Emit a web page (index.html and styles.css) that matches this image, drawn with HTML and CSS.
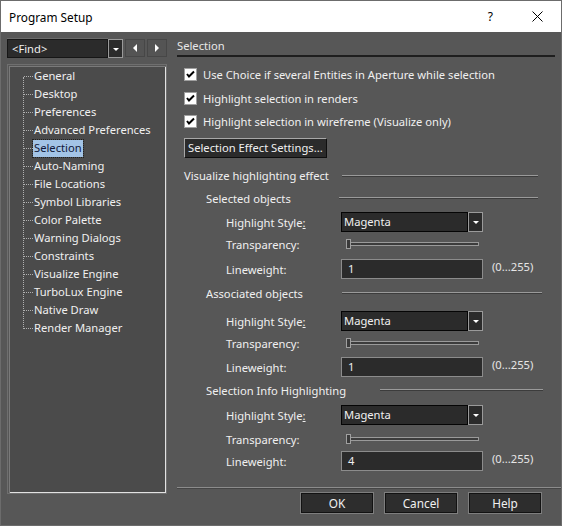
FILE: index.html
```html
<!DOCTYPE html>
<html lang="en">
  <head>
    <meta charset="UTF-8" />
    <title>Program Setup</title>
    <link rel="stylesheet" href="styles.css">
  </head>
  <body>
    <div class="window">
      <!-- Title bar -->
      <div class="titlebar">
        <span class="title">Program Setup</span>
        <span class="help">?</span>
        <svg class="close" width="11" height="11" viewBox="0 0 11 11">
          <path d="M0.5 0.5 L10.5 10.5 M10.5 0.5 L0.5 10.5" stroke="#000" stroke-width="1" fill="none" />
        </svg>
      </div>

      <div class="content">
        <!-- Left: find + tree -->
        <div class="side">
          <div class="find">
            <div class="find-box">&lt;Find&gt;</div>
            <div class="drop"><span class="tri-down"></span></div>
            <div class="nav"><span class="tri-left"></span></div>
            <div class="nav"><span class="tri-right"></span></div>
          </div>
          <div class="tree">
            <ul>
              <li>General</li>
              <li>Desktop</li>
              <li>Preferences</li>
              <li>Advanced Preferences</li>
              <li><span class="selected">Selection</span></li>
              <li>Auto-Naming</li>
              <li>File Locations</li>
              <li>Symbol Libraries</li>
              <li>Color Palette</li>
              <li>Warning Dialogs</li>
              <li>Constraints</li>
              <li>Visualize Engine</li>
              <li>TurboLux Engine</li>
              <li>Native Draw</li>
              <li>Render Manager</li>
            </ul>
          </div>
        </div>

        <!-- Right: page -->
        <div class="page">
          <div class="page-title">Selection</div>

          <div class="checks">
            <div class="check">
              <span class="box"><svg width="11" height="11" viewBox="0 0 11 11"><path d="M2 5 L4 7.5 L9 2.5" stroke="#000" stroke-width="2" fill="none" /></svg></span>
              Use Choice if several Entities in Aperture while selection
            </div>
            <div class="check">
              <span class="box"><svg width="11" height="11" viewBox="0 0 11 11"><path d="M2 5 L4 7.5 L9 2.5" stroke="#000" stroke-width="2" fill="none" /></svg></span>
              Highlight selection in renders
            </div>
            <div class="check short">
              <span class="box"><svg width="11" height="11" viewBox="0 0 11 11"><path d="M2 5 L4 7.5 L9 2.5" stroke="#000" stroke-width="2" fill="none" /></svg></span>
              Highlight selection in wirefreme (Visualize only)
            </div>
          </div>

          <div class="effect-btn">Selection Effect Settings...</div>

          <div class="group-title top">
            <span>Visualize highlighting effect</span>
            <span class="etch line-a"></span>
          </div>

          <!-- Selected objects -->
          <div class="group-title sub g1">
            <span>Selected objects</span>
            <span class="etch line-b"></span>
          </div>
          <div class="field style-row m3">
            <span class="label">Highlight Style<u>:</u></span>
            <div class="combo"><div class="combo-text">Magenta</div><div class="drop"><span class="tri-down"></span></div></div>
          </div>
          <div class="field slider-row">
            <span class="label">Transparency:</span>
            <div class="slider"><span class="track"></span><span class="thumb"></span></div>
          </div>
          <div class="field m3">
            <span class="label">Lineweight:</span>
            <div class="input">1</div>
            <span class="range">(0...255)</span>
          </div>

          <!-- Associated objects -->
          <div class="group-title sub g2">
            <span>Associated objects</span>
            <span class="etch line-c"></span>
          </div>
          <div class="field style-row m7">
            <span class="label">Highlight Style<u>:</u></span>
            <div class="combo"><div class="combo-text">Magenta</div><div class="drop"><span class="tri-down"></span></div></div>
          </div>
          <div class="field slider-row">
            <span class="label">Transparency:</span>
            <div class="slider"><span class="track"></span><span class="thumb"></span></div>
          </div>
          <div class="field m2">
            <span class="label">Lineweight:</span>
            <div class="input">1</div>
            <span class="range">(0...255)</span>
          </div>

          <!-- Selection Info Highlighting -->
          <div class="group-title sub g3">
            <span>Selection Info Highlighting</span>
            <span class="etch line-d"></span>
          </div>
          <div class="field style-row m4">
            <span class="label">Highlight Style<u>:</u></span>
            <div class="combo"><div class="combo-text">Magenta</div><div class="drop"><span class="tri-down"></span></div></div>
          </div>
          <div class="field slider-row m2">
            <span class="label">Transparency:</span>
            <div class="slider"><span class="track"></span><span class="thumb"></span></div>
          </div>
          <div class="field">
            <span class="label">Lineweight:</span>
            <div class="input">4</div>
            <span class="range">(0...255)</span>
          </div>

          <div class="separator"></div>

          <div class="buttons">
            <div class="btn">OK</div>
            <div class="btn">Cancel</div>
            <div class="btn">Help</div>
          </div>
        </div>
      </div>
    </div>
  </body>
</html>
```

FILE: styles.css
```css
* {
  margin: 0;
  padding: 0;
  box-sizing: border-box;
}

body {
  font-family: "Noto Sans", "Open Sans", sans-serif;
  font-size: 11.2px;
  background: #575757;
  color: #f0f0f0;
}

.window {
  width: 562px;
  height: 526px;
  border: 1px solid #6c6c6c;
  background: #575757;
  display: flex;
  flex-direction: column;
}

/* Title bar */
.titlebar {
  height: 31px;
  background: #fff;
  color: #000;
  display: flex;
  align-items: center;
  padding-left: 8px;
  font-size: 11.8px;
}

.titlebar .title {
  flex: 1;
}

.titlebar .help {
  font-size: 12px;
  margin-right: 39px;
}

.titlebar .close {
  margin-right: 18px;
}

.content {
  flex: 1;
  display: flex;
}

/* Left side */
.side {
  width: 166px;
  padding: 7px 0 0 6px;
  margin-right: 10px;
}

.find {
  display: flex;
  height: 19px;
}

.find-box {
  width: 102px;
  background: #2b2b2b;
  border: 1px solid #161616;
  box-shadow: 0 -1px 0 #6a6a6a;
  padding-left: 4px;
  line-height: 17px;
}

.drop {
  width: 15px;
  background: #2b2b2b;
  border: 1px solid #9a9a9a;
  display: flex;
  align-items: center;
  justify-content: center;
}

.tri-down {
  width: 0;
  height: 0;
  border-left: 3px solid transparent;
  border-right: 3px solid transparent;
  border-top: 3px solid #fff;
  margin-top: 1px;
}

.nav {
  width: 20px;
  height: 18px;
  margin-left: 2px;
  background: #545454;
  border: 1px solid #474747;
  display: flex;
  align-items: center;
  justify-content: center;
}

.nav:first-of-type {
  margin-left: 1px;
}

.tri-left,
.tri-right {
  width: 0;
  height: 0;
  border-top: 4px solid transparent;
  border-bottom: 4px solid transparent;
}

.tri-left {
  border-right: 4px solid #fff;
}

.tri-right {
  border-left: 4px solid #fff;
}

.tree {
  margin-top: 6px;
  width: 160px;
  height: 430px;
  background: #4b4b4b;
  border: 1px solid #6f6f6f;
  box-shadow: inset 1px 1px 0 #575757, inset 2px 2px 0 #7a7a7a, inset -1px -1px 0 #e2e2e2;
  padding: 2px 0 0 26px;
}

.tree ul {
  list-style: none;
  position: relative;
}

.tree ul::before {
  content: "";
  position: absolute;
  left: -11px;
  top: 10px;
  bottom: 8px;
  border-left: 1px dotted #b0b0b0;
}

.tree li {
  height: 18px;
  line-height: 18px;
  position: relative;
  white-space: nowrap;
}

.tree li::before {
  content: "";
  position: absolute;
  left: -10px;
  top: 9px;
  width: 9px;
  border-top: 1px dotted #b0b0b0;
}

.tree .selected {
  display: inline-block;
  background: #a3c4e6;
  color: #10183a;
  outline: 1px dotted #202020;
  height: 17px;
  line-height: 16px;
  padding: 0 1px;
  margin-left: -1px;
}

/* Right side */
.page {
  flex: 1;
  display: flex;
  flex-direction: column;
}

.page-title {
  margin: 5px 6px 0 0;
  height: 20px;
  line-height: 18px;
  border-bottom: 2px solid #1e1e1e;
  color: #e8e8e8;
}

.checks {
  margin-top: 5px;
  padding-left: 7px;
}

.check {
  height: 24px;
  display: flex;
  align-items: center;
  gap: 6px;
}

.check.short {
  height: 23px;
}

.box {
  width: 13px;
  height: 13px;
  background: #fff;
  border: 1px solid #a0a0a0;
  display: flex;
  align-items: center;
  justify-content: center;
}

.effect-btn {
  margin: 5px 0 0 7px;
  width: 143px;
  height: 20px;
  background: #2b2b2b;
  border: 1px solid #0e0e0e;
  border-top-color: #a8a8a8;
  border-left-color: #a8a8a8;
  line-height: 18px;
  padding-left: 3px;
  white-space: nowrap;
}

/* Groups */
.group-title {
  display: flex;
  align-items: center;
  height: 22px;
}

.group-title.top {
  margin-top: 6px;
  height: 23px;
  padding-left: 7px;
}

.group-title.sub {
  padding-left: 29px;
}

.group-title.g1 {
  height: 22px;
}

.group-title.g2 {
  margin-top: 3px;
}

.group-title.g3 {
  margin-top: 2px;
}

.etch {
  margin-left: auto;
  height: 2px;
  border-top: 1px solid #9a9a9a;
  border-bottom: 1px solid #3c3c3c;
}

.line-a {
  width: 196px;
  margin-right: 23px;
}

.line-b {
  width: 199px;
  margin-right: 23px;
}

.line-c {
  width: 200px;
  margin-right: 19px;
}

.line-d {
  width: 163px;
  margin-right: 18px;
}

.field {
  display: flex;
  align-items: center;
  height: 20px;
  padding-left: 49px;
}

.field.m2 { margin-top: 2px; }
.field.m3 { margin-top: 3px; }
.field.m4 { margin-top: 4px; }
.field.m7 { margin-top: 7px; }

.field.slider-row {
  height: 24px;
}

.label {
  width: 115px;
  white-space: nowrap;
}

.label u {
  text-decoration-thickness: 1px;
}

.combo {
  display: flex;
  width: 142px;
  height: 20px;
}

.combo-text {
  flex: 1;
  background: #2b2b2b;
  border: 1px solid #050505;
  line-height: 18px;
  padding-left: 2px;
}

.combo .drop {
  width: 15px;
}

.slider {
  position: relative;
  width: 133px;
  height: 10px;
  margin-left: 5px;
}

.slider .track {
  position: absolute;
  left: 0;
  right: 0;
  top: 3px;
  height: 4px;
  border: 1px solid #9a9a9a;
  background: #3c3c3c;
}

.slider .thumb {
  position: absolute;
  left: 0;
  top: 0;
  width: 5px;
  height: 10px;
  border: 1px solid #a0a0a0;
  background: #3a3a3a;
}

.input {
  width: 142px;
  height: 20px;
  background: #2b2b2b;
  border: 1px solid #8c8c8c;
  line-height: 18px;
  padding-left: 6px;
}

.range {
  margin-left: 9px;
  margin-top: -5px;
  color: #e6e6e6;
}

.separator {
  margin-top: 16px;
  height: 2px;
  border-top: 1px solid #8c8c8c;
  border-bottom: 1px solid #454545;
}

.buttons {
  display: flex;
  justify-content: flex-end;
  gap: 10px;
  margin: 3px 19px 0 0;
}

.btn {
  width: 74px;
  height: 22px;
  background: #2d2d2d;
  border: 1px solid #7e7e7e;
  box-shadow: inset 0 0 0 1px #121212;
  display: flex;
  align-items: center;
  justify-content: center;
  font-size: 11.8px;
}
```
